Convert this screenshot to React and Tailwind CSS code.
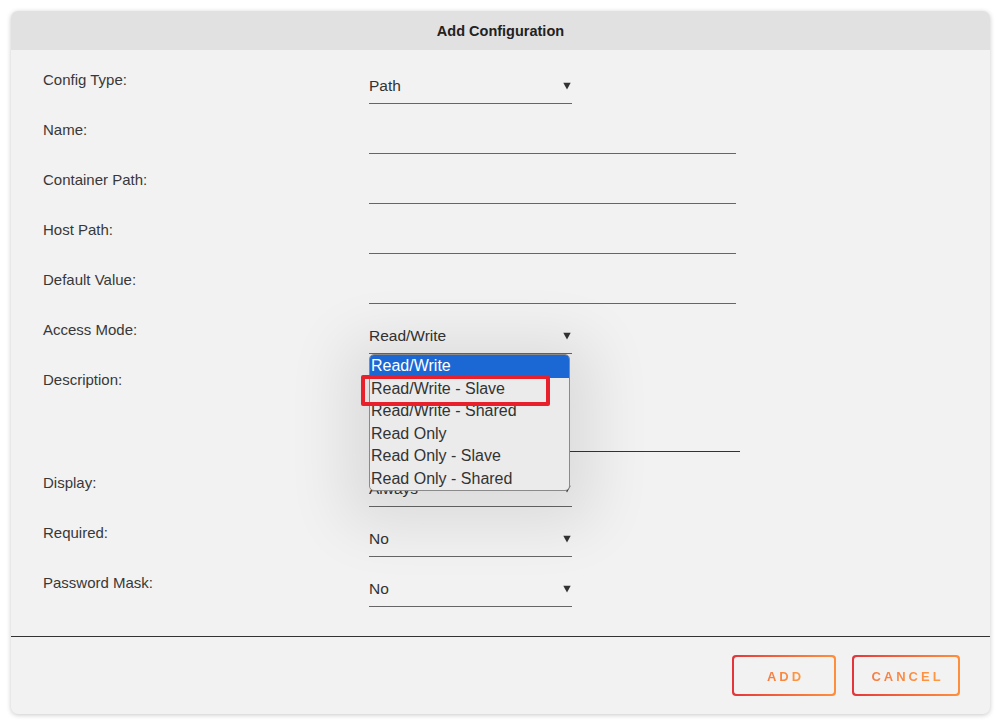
import React from "react";

const Arrow = () => (
  <svg width="8" height="8" viewBox="0 0 8 8" className="shrink-0">
    <polygon points="0.3,0.8 7.7,0.8 4,7.6" fill="#333" />
  </svg>
);

const Label = ({ children }) => (
  <div className="w-[326px] shrink-0 pt-[1px] text-[15px] leading-[20px] text-[#383838]">
    {children}
  </div>
);

const Select = ({ value }) => (
  <div className="w-[203px] h-[35px] pt-[7px] flex items-start justify-between border-b border-[#666] text-[15.5px] leading-[20px] text-[#333]">
    <span>{value}</span>
    <span className="pt-[6px] pr-[1px]">
      <Arrow />
    </span>
  </div>
);

const TextInput = () => <div className="w-[367px] h-[35px] border-b border-[#666]" />;

const Row = ({ label, children }) => (
  <div className="flex h-[50px]">
    <Label>{label}</Label>
    <div>{children}</div>
  </div>
);

const options = [
  "Read/Write",
  "Read/Write - Slave",
  "Read/Write - Shared",
  "Read Only",
  "Read Only - Slave",
  "Read Only - Shared",
];

export default function App() {
  return (
    <div className="w-[1000px] h-[725px] bg-white pt-[11px] pl-[11px] font-['Liberation_Sans',Arial,sans-serif]">
      <div className="w-[979px] h-[703px] rounded-[7px] bg-[#f2f2f2] shadow-[0_1px_5px_rgba(0,0,0,0.22)] overflow-hidden flex flex-col">
        <div className="h-[39px] pt-[2px] bg-[#e1e1e1] flex items-center justify-center text-[14.5px] font-bold text-[#222]">
          Add Configuration
        </div>

        <div className="h-[587px] pt-[19px] pl-[32px] border-b border-[#333] flex flex-col">
          <Row label="Config Type:">
            <Select value="Path" />
          </Row>
          <Row label="Name:">
            <TextInput />
          </Row>
          <Row label="Container Path:">
            <TextInput />
          </Row>
          <Row label="Host Path:">
            <TextInput />
          </Row>
          <Row label="Default Value:">
            <TextInput />
          </Row>
          <Row label="Access Mode:">
            <div className="relative">
              <Select value="Read/Write" />
              <div className="absolute left-0 top-[35px] z-10 w-[201px] rounded-[5px] border border-[#8a8a8a] bg-[#ebebeb] overflow-hidden shadow-[0_10px_60px_25px_rgba(0,0,0,0.09)] text-[16px] leading-[22.5px] text-[#333]">
                {options.map((o, i) => (
                  <div
                    key={o}
                    className={
                      i === 0
                        ? "pl-[1px] bg-[#1b68d4] text-white"
                        : "pl-[1px]"
                    }
                  >
                    {o}
                  </div>
                ))}
              </div>
              <div className="absolute left-[-8px] top-[56px] z-20 w-[189px] h-[31px] border-[4px] border-[#e8202b] rounded-[2px]" />
            </div>
          </Row>
          <div className="flex h-[103px]">
            <Label>Description:</Label>
            <div className="w-[371px] h-[83px] border-b border-[#333]" />
          </div>
          <Row label="Display:">
            <Select value="Always" />
          </Row>
          <Row label="Required:">
            <Select value="No" />
          </Row>
          <Row label="Password Mask:">
            <Select value="No" />
          </Row>
        </div>

        <div className="flex-1 flex justify-end items-start pt-[18px] pr-[30px] gap-[16px]">
          {["ADD", "CANCEL"].map((t) => (
            <div
              key={t}
              className={
                (t === "ADD" ? "w-[104px]" : "w-[108px]") +
                " h-[41px] p-[2px] rounded-[4px] bg-gradient-to-r from-[#e5333a] to-[#ff8f3c]"
              }
            >
              <div className="w-full h-full rounded-[3px] bg-[#f2f2f2] flex items-center justify-center pl-[3px] pt-[3px]">
                <span className="text-[13px] font-bold tracking-[3px] bg-gradient-to-r from-[#f77a3e] to-[#ff9a40] bg-clip-text text-transparent">
                  {t}
                </span>
              </div>
            </div>
          ))}
        </div>
      </div>
    </div>
  );
}
